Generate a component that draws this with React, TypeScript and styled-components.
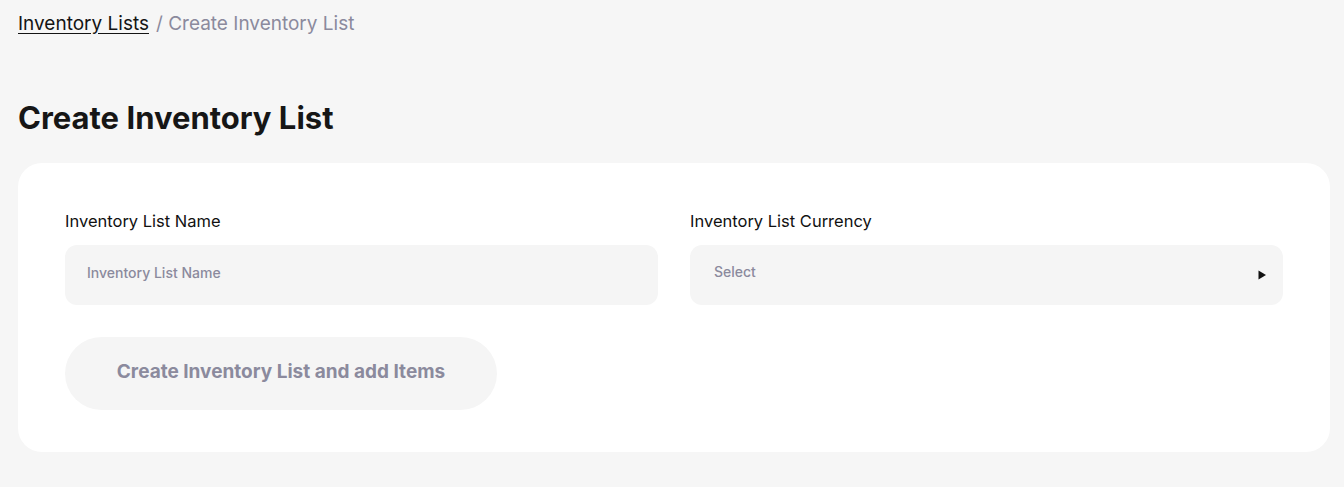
import styled, { createGlobalStyle } from 'styled-components';

const GlobalStyle = createGlobalStyle`
	html, body {
		margin: 0;
		padding: 0;
		background: #f6f6f6;
		font-family: Inter, 'Noto Sans', sans-serif;
	}
	* { box-sizing: border-box; }
`;

const Page = styled.div`
	padding: 10px 14px 0 18px;
	min-height: 487px;
`;

const Breadcrumbs = styled.nav`
	display: flex;
	align-items: center;
	gap: 7px;
	font-size: 19px;
	line-height: 28px;
`;

const CrumbLink = styled.a`
	color: #141414;
	text-decoration: underline;
	text-underline-offset: 3px;
	cursor: pointer;
`;

const CrumbCurrent = styled.span`
	color: #8b8a9d;
`;

const Title = styled.h1`
	margin: 60px 0 25px;
	font-size: 31px;
	line-height: 40px;
	font-weight: 700;
	color: #161616;
`;

const Card = styled.section`
	background: #ffffff;
	border-radius: 24px;
	padding: 47px 47px 42px;
`;

const FieldRow = styled.div`
	display: grid;
	grid-template-columns: 1fr 1fr;
	gap: 32px;
`;

const Field = styled.label`
	display: flex;
	flex-direction: column;
	gap: 13px;
`;

const Label = styled.span`
	font-size: 16.5px;
	line-height: 22px;
	color: #111111;
`;

const TextInput = styled.input`
	height: 60px;
	border: none;
	border-radius: 12px;
	background: #f5f5f5;
	padding: 0 22px 6px;
	font-family: inherit;
	font-size: 14px;
	font-weight: 500;
	color: #111;
	outline: none;

	&::placeholder {
		color: #8b8a9d;
	}
`;

const SelectBox = styled.div`
	height: 60px;
	border-radius: 12px;
	background: #f5f5f5;
	padding: 0 16px 0 24px;
	display: flex;
	align-items: center;
	justify-content: space-between;
	cursor: pointer;
`;

const SelectPlaceholder = styled.span`
	font-size: 14px;
	font-weight: 500;
	color: #8b8a9d;
	margin-top: -7px;
`;

const SubmitButton = styled.button`
	margin-top: 32px;
	width: 432px;
	height: 73px;
	padding: 0 0 4px;
	border: none;
	border-radius: 999px;
	background: #f5f5f5;
	font-family: inherit;
	font-size: 19px;
	font-weight: 700;
	color: #8b8a9d;
	cursor: not-allowed;
`;

const Caret = () => (
	<svg width="9" height="10" viewBox="0 0 9 10">
		<path d="M0.5 0.5 L8 5 L0.5 9.5 Z" fill="#111" />
	</svg>
);

export default function App() {
	return (
		<>
			<GlobalStyle />
			<Page>
				<Breadcrumbs>
					<CrumbLink>Inventory Lists</CrumbLink>
					<CrumbCurrent>/ Create Inventory List</CrumbCurrent>
				</Breadcrumbs>
				<Title>Create Inventory List</Title>
				<Card>
					<FieldRow>
						<Field>
							<Label>Inventory List Name</Label>
							<TextInput placeholder="Inventory List Name" />
						</Field>
						<Field as="div">
							<Label>Inventory List Currency</Label>
							<SelectBox>
								<SelectPlaceholder>Select</SelectPlaceholder>
								<Caret />
							</SelectBox>
						</Field>
					</FieldRow>
					<SubmitButton disabled>Create Inventory List and add Items</SubmitButton>
				</Card>
			</Page>
		</>
	);
}
